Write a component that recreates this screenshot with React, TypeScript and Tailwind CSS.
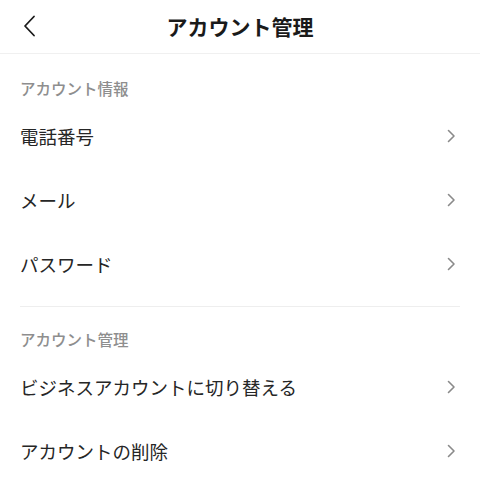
const SECTIONS = [
  {
    title: "アカウント情報",
    items: ["電話番号", "メール", "パスワード"],
  },
  {
    title: "アカウント管理",
    items: ["ビジネスアカウントに切り替える", "アカウントの削除"],
  },
]

function ChevronRight() {
  return (
    <svg className="w-[10px] h-[14px] text-[#8a8a8a]" viewBox="0 0 10 14" fill="none" stroke="currentColor">
      <path d="M2.5 1.5 L8 7 L2.5 12.5" strokeWidth={1.6} strokeLinecap="round" strokeLinejoin="round" />
    </svg>
  )
}

export default function App() {
  return (
    <div
      className="w-[480px] h-[483px] overflow-hidden bg-white text-[#262626]"
      style={{ fontFamily: '"Noto Sans CJK JP", "Noto Sans", sans-serif' }}
    >
      {/* Header */}
      <header className="relative h-[54px] flex items-center justify-center border-b-[1.5px] border-[#f0f0f0]">
        <button className="absolute left-[17px] top-[14px] w-6 h-6 flex items-center justify-center">
          <svg className="w-[16px] h-[24px] text-[#1a1a1a]" viewBox="0 0 16 24" fill="none" stroke="currentColor">
            <path d="M13 2.5 L4 12 L13 21.5" strokeWidth={1.8} strokeLinecap="round" strokeLinejoin="round" />
          </svg>
        </button>
        <h1 className="text-[21px] font-bold leading-none text-[#1a1a1a] -mt-[1px]">アカウント管理</h1>
      </header>

      {SECTIONS.map((section, i) => (
        <div key={section.title}>
          {i > 0 && <div className="mx-5 mt-[10px] h-px bg-[#eeeeee]" />}
          <section className={i === 0 ? "pt-6" : "pt-[22px]"}>
            <div className="px-5 h-[22px] flex items-center text-[15.5px] font-medium text-[#8e8e8e]">
              {section.title}
            </div>
            <ul className="mt-[4px]">
              {section.items.map((item) => (
                <li key={item} className="h-16 px-5 flex items-center justify-between">
                  <span className="text-[18.5px] leading-none">{item}</span>
                  <span className="pr-[4px]">
                    <ChevronRight />
                  </span>
                </li>
              ))}
            </ul>
          </section>
        </div>
      ))}
    </div>
  )
}
